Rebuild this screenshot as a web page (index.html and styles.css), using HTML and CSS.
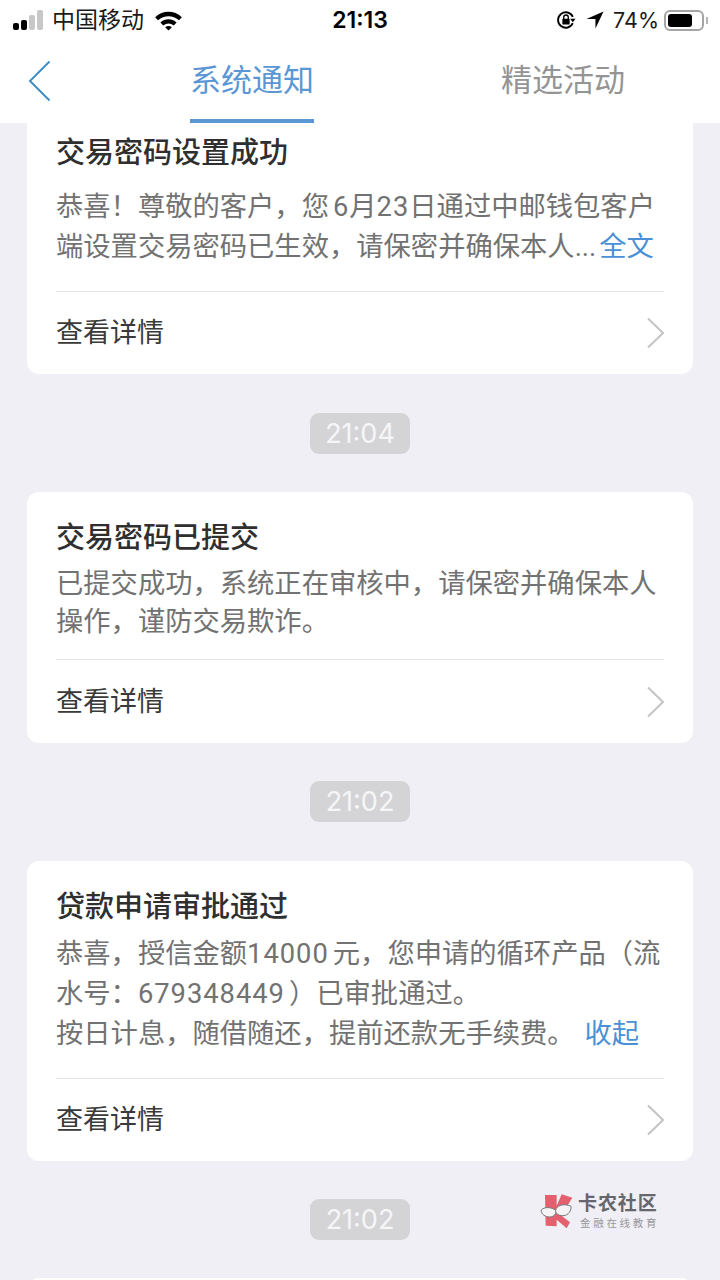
FILE: index.html
```html
<!DOCTYPE html>
<html lang="zh-CN">
  <head>
    <meta charset="UTF-8" />
    <meta name="viewport" content="width=device-width, initial-scale=1.0" />
    <title>系统通知</title>
    <link rel="stylesheet" href="styles.css">
  </head>
  <body>
    <div class="screen">
      <div class="status-bar">
        <div class="status-left">
          <div class="signal"><i class="on"></i><i class="on"></i><i></i><i></i></div>
          <span class="carrier">中国移动</span>
          <svg class="wifi" width="29" height="21" viewBox="0 0 30 22">
            <path d="M1 7.500C9 0 21 0 29 7.500L26 10.800C19.500 5 10.500 5 4 10.800Z" fill="#000"/>
            <path d="M6.500 13C11.500 8.500 18.500 8.500 23.500 13L20.500 16.200C17 13.300 13 13.300 9.500 16.200Z" fill="#000"/>
            <path d="M11.500 18C13.500 16.500 16.500 16.500 18.500 18L15 21.500Z" fill="#000"/>
          </svg>
        </div>
        <div class="clock">21:13</div>
        <div class="status-right">
          <svg width="20" height="20" viewBox="0 0 22 22" fill="none">
            <path d="M18.500 14.500A8.500 8.500 0 1 1 18.500 7.500" stroke="#000" stroke-width="2"/>
            <path d="M15.500 9.500H21.500L18.500 13.500Z" fill="#000"/>
            <rect x="7" y="9.500" width="8" height="6.500" rx="1" fill="#000"/>
            <path d="M8.500 10V8A2.500 2.500 0 0 1 13.500 8V10" stroke="#000" stroke-width="1.500"/>
          </svg>
          <svg class="arrow" width="18" height="18" viewBox="0 0 20 20">
            <path d="M19.500 0.500L0.500 9H10.500V19.500Z" fill="#000"/>
          </svg>
          <span class="battery-text">74%</span>
          <div class="battery"><div class="battery-fill"></div></div>
          <div class="battery-cap"></div>
        </div>
      </div>

      <div class="nav">
        <svg class="back" width="24" height="42" viewBox="0 0 24 42" fill="none">
          <path d="M21.500 1.500L2 21L21.500 40.500" stroke="#3f8ec4" stroke-width="2"/>
        </svg>
        <div class="tab active">系统通知</div>
        <div class="tab">精选活动</div>
      </div>

      <div class="list">
        <div class="card">
          <div class="card-body clipped">
            <h3>交易密码设置成功</h3>
            <p>恭喜！尊敬的客户，您<span class="num lead">6</span>月<span class="num">23</span>日通过中邮钱包客户<br>端设置交易密码已生效，请保密并确保本人...<a class="more">全文</a></p>
          </div>
          <div class="card-foot">
            <span>查看详情</span>
            <svg width="20" height="32" viewBox="0 0 20 32" fill="none"><path d="M4 1.500L19 16L4 30.500" stroke="#c4c4c6" stroke-width="2"/></svg>
          </div>
        </div>

        <div class="time first"><span>21:04</span></div>

        <div class="card">
          <div class="card-body short">
            <h3>交易密码已提交</h3>
            <p>已提交成功，系统正在审核中，请保密并确保本人<br>操作，谨防交易欺诈。</p>
          </div>
          <div class="card-foot tall">
            <span>查看详情</span>
            <svg width="20" height="32" viewBox="0 0 20 32" fill="none"><path d="M4 1.500L19 16L4 30.500" stroke="#c4c4c6" stroke-width="2"/></svg>
          </div>
        </div>

        <div class="time"><span>21:02</span></div>

        <div class="card">
          <div class="card-body">
            <h3>贷款申请审批通过</h3>
            <p>恭喜，授信金额<span class="num trail">14000</span>元，您申请的循环产品（流<br>水号：<span class="num trail">679348449</span>）已审批通过。<br>按日计息，随借随还，提前还款无手续费。 <a class="more">收起</a></p>
          </div>
          <div class="card-foot">
            <span>查看详情</span>
            <svg width="20" height="32" viewBox="0 0 20 32" fill="none"><path d="M4 1.500L19 16L4 30.500" stroke="#c4c4c6" stroke-width="2"/></svg>
          </div>
        </div>

        <div class="time"><span>21:02</span></div>

        <div class="card stub"></div>
      </div>

      <div class="watermark">
        <svg width="42" height="50" viewBox="0 0 126 150">
          <path d="M30 30H65V62L80 28L112 38L90 74L72 86L105 112L95 130L65 104V124L32 122Z" fill="#e4606e"/>
          <path d="M18 76C28 64 50 66 62 76C66 84 58 96 44 96C30 96 20 88 18 76Z" fill="#f6f3f4" stroke="#77777c" stroke-width="3"/>
          <path d="M62 76C64 60 88 54 108 64C110 76 100 92 84 92C70 92 62 86 62 76Z" fill="#f6f3f4" stroke="#77777c" stroke-width="3"/>
        </svg>
        <div class="watermark-text">
          <div class="wm-name">卡农社区</div>
          <div class="wm-sub">金融在线教育</div>
        </div>
      </div>
    </div>
  </body>
</html>
```

FILE: styles.css
```css
* {
  box-sizing: border-box;
}

body {
  margin: 0;
  background-color: #efeff5;
  font-family: "Noto Sans CJK SC", sans-serif;
}

.screen {
  position: relative;
  width: 720px;
  height: 1280px;
  overflow: hidden;
  background-color: #efeff5;
}

.status-bar {
  height: 40px;
  background-color: #fff;
  display: grid;
  grid-template-columns: 1fr auto 1fr;
  align-items: center;
  padding: 0 12px;
}

.status-left,
.status-right {
  display: flex;
  align-items: center;
}

.status-right {
  justify-content: flex-end;
}

.signal {
  display: flex;
  align-items: flex-end;
  gap: 2px;
  height: 20px;
  margin-left: 1px;
}

.signal i {
  display: block;
  width: 6px;
  border-radius: 2px;
  background-color: #c8c8c8;
}

.signal i.on {
  background-color: #000;
}

.signal i:nth-child(1) { height: 7px; }
.signal i:nth-child(2) { height: 10px; }
.signal i:nth-child(3) { height: 15px; }
.signal i:nth-child(4) { height: 20px; }

.carrier {
  margin: -4px 0 0 9px;
  font-size: 23px;
  color: #1a1a1a;
}

.wifi {
  margin-left: 10px;
}

.clock {
  font-family: Inter, sans-serif;
  font-size: 23px;
  font-weight: 600;
  color: #000;
}

.arrow {
  margin-left: 10px;
}

.battery-text {
  margin-left: 9px;
  font-family: Inter, sans-serif;
  font-size: 21.5px;
  color: #1a1a1a;
}

.battery {
  width: 40px;
  height: 21px;
  margin-left: 5px;
  padding: 2px;
  border: 2px solid #a5a5a5;
  border-radius: 6px;
}

.battery-fill {
  width: 76%;
  height: 100%;
  border-radius: 3px;
  background-color: #000;
}

.battery-cap {
  width: 2px;
  height: 7px;
  margin-left: 2px;
  background-color: #b5b5b5;
}

.nav {
  height: 83px;
  background-color: #fff;
  display: flex;
  padding-left: 28px;
}

.back {
  margin-top: 20px;
}

.tab {
  width: 124px;
  height: 83px;
  padding-top: 14px;
  font-size: 31px;
  line-height: 48px;
  text-align: center;
  white-space: nowrap;
  color: #949494;
}

.tab.active {
  margin-left: 138px;
  color: #5b97d5;
  border-bottom: 4px solid #5b97d5;
}

.tab + .tab {
  margin-left: 187px;
}

.list {
  padding: 0 27px;
}

.card {
  background-color: #fff;
  border-radius: 12px;
}

.card:first-child {
  border-radius: 0 0 12px 12px;
}

.card.stub {
  height: 84px;
  margin-top: -1px;
}

.card-body {
  padding: 21px 29px 24px;
}

.card-body.clipped {
  padding-top: 5px;
}

.card-body.short {
  padding-bottom: 18px;
}

.card-body h3 {
  margin: 0 0 8px;
  font-size: 29px;
  line-height: 44px;
  font-weight: 500;
  color: #2f2f2f;
}

.card-body.clipped h3 {
  margin-bottom: 15px;
}

.card-body p {
  margin: 0;
  font-family: Roboto, "Noto Sans CJK SC", sans-serif;
  font-size: 27.3px;
  line-height: 40px;
  color: #727272;
  white-space: nowrap;
}

.card-body.short p {
  line-height: 38px;
}

.card-body a {
  color: #4a90d6;
}

.card-body a.more {
  margin-left: 3px;
}

.num {
  letter-spacing: 1px;
}

.num.lead {
  margin-left: 4px;
}

.num.trail {
  margin-right: 4px;
}

.card-foot {
  height: 83px;
  margin: 0 29px;
  border-top: 1px solid #e4e4e6;
  display: flex;
  align-items: center;
  justify-content: space-between;
  font-size: 27px;
  color: #3a3a3a;
}

.card-foot.tall {
  height: 84px;
}

.card-foot span {
  margin-top: -5px;
}

.time {
  display: flex;
  justify-content: center;
  padding: 38px 0 39px;
}

.time.first {
  padding: 39px 0 38px;
}

.time span {
  width: 100px;
  height: 41px;
  border-radius: 9px;
  background-color: #d4d4d6;
  color: #f6f6f6;
  font-family: Inter, sans-serif;
  font-size: 27px;
  line-height: 41px;
  text-align: center;
}

.watermark {
  position: absolute;
  left: 535px;
  top: 1185px;
  display: flex;
  gap: 1px;
}

.watermark-text {
  padding-top: 5px;
}

.wm-name {
  font-size: 19px;
  line-height: 24px;
  font-weight: 700;
  letter-spacing: 0.900px;
  color: #66666b;
}

.wm-sub {
  margin-top: 2px;
  padding-left: 2px;
  font-size: 10.500px;
  line-height: 13px;
  color: #98989c;
  letter-spacing: 2.700px;
  white-space: nowrap;
}
```
